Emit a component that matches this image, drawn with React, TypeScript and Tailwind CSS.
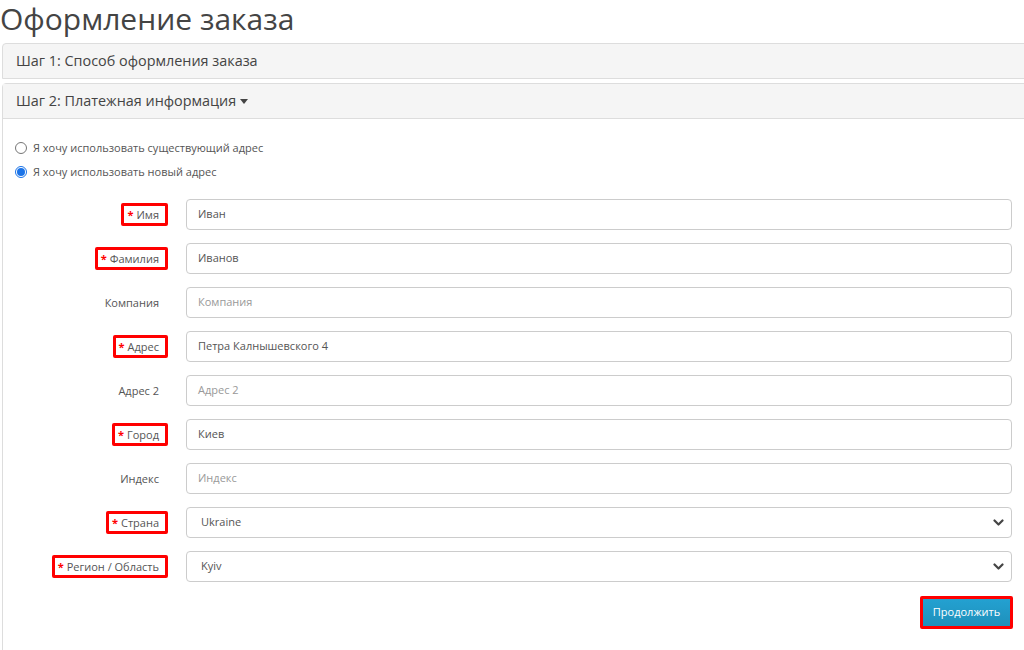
import React from "react";

const font = { fontFamily: "'Open Sans', 'Noto Sans', sans-serif" };

type Row = { label: string; value: string; required: boolean; placeholder?: boolean; select?: boolean };

const rows: Row[] = [
  { label: "Имя", value: "Иван", required: true },
  { label: "Фамилия", value: "Иванов", required: true },
  { label: "Компания", value: "Компания", required: false, placeholder: true },
  { label: "Адрес", value: "Петра Калнышевского 4", required: true },
  { label: "Адрес 2", value: "Адрес 2", required: false, placeholder: true },
  { label: "Город", value: "Киев", required: true },
  { label: "Индекс", value: "Индекс", required: false, placeholder: true },
  { label: "Страна", value: "Ukraine", required: true, select: true },
  { label: "Регион / Область", value: "Kyiv", required: true, select: true },
];

function Chevron() {
  return (
    <svg width="11" height="8" viewBox="0 0 11 8" className="shrink-0">
      <path d="M1.5 1.5 L5.5 5.5 L9.5 1.5" fill="none" stroke="#444" strokeWidth="2.2" strokeLinecap="round" strokeLinejoin="round" />
    </svg>
  );
}

export default function App() {
  return (
    <div className="w-[1024px] h-[650px] overflow-hidden bg-white" style={font}>
      <h1 className="h-[43px] m-0 text-[30px] leading-[38px] font-normal text-[#444] whitespace-nowrap">
        Оформление заказа
      </h1>
      <div className="ml-[2px] w-[1026px]">
        <div className="h-[36px] border border-[#ddd] rounded-t-[4px] bg-[#f5f5f5] flex items-center pl-[13px] text-[14.4px] text-[#444]">
          Шаг 1: Способ оформления заказа
        </div>
        <div className="mt-[4px] border border-[#ddd] rounded-t-[4px] h-[700px]">
          <div className="h-[35px] bg-[#f5f5f5] border-b border-[#ddd] flex items-center pl-[13px] text-[14.4px] text-[#444]">
            Шаг 2: Платежная информация
            <svg width="8" height="5" viewBox="0 0 8 5" className="ml-[4px] mt-[1px]">
              <path d="M0 0 L8 0 L4 5 Z" fill="#444" />
            </svg>
          </div>
          <div className="pt-[19px] pr-[15px]">
            <div className="pl-[12px] flex flex-col gap-[4px] text-[11px] text-[#555]">
              <div className="h-[20px] flex items-center gap-[6px]">
                <span className="w-[12px] h-[12px] rounded-full border border-[#767676] bg-white" />
                <span>Я хочу использовать существующий адрес</span>
              </div>
              <div className="h-[20px] flex items-center gap-[6px]">
                <span className="w-[12px] h-[12px] rounded-full border border-[#1a73e8] bg-white flex items-center justify-center">
                  <span className="w-[8px] h-[8px] rounded-full bg-[#1a73e8]" />
                </span>
                <span>Я хочу использовать новый адрес</span>
              </div>
            </div>
            <div className="mt-[17px] flex flex-col gap-[13px]">
              {rows.map((r) => (
                <div key={r.label} className="h-[31px] flex items-center">
                  <div className="w-[165px] shrink-0 flex justify-end">
                    <span
                      className={
                        "h-[23px] flex items-center border-[3px] rounded-[2px] pl-[3px] pr-[6px] text-[11px] leading-[17px] text-[#555] whitespace-nowrap " +
                        (r.required ? "border-[#ff0000]" : "border-transparent")
                      }
                    >
                      {r.required && <span className="text-[#ff0000] font-bold mr-[3px]">*</span>}
                      {r.label}
                    </span>
                  </div>
                  <div
                    className={
                      "ml-[18px] flex-1 h-[31px] border border-[#ccc] rounded-[4px] bg-white flex items-center justify-between text-[11px] " +
                      (r.select ? "pl-[14px] pr-[7px]" : "pl-[11px]") +
                      (r.placeholder ? " text-[#999]" : " text-[#555]")
                    }
                  >
                    <span>{r.value}</span>
                    {r.select && <Chevron />}
                  </div>
                </div>
              ))}
            </div>
            <div className="mt-[14px] flex justify-end mr-[-1px]">
              <div className="border-[3px] border-[#ff0000] rounded-[2px]">
                <div className="w-[87px] h-[27px] flex items-center justify-center text-[11px] text-white bg-gradient-to-b from-[#23a1d1] to-[#1f90bb]">
                  Продолжить
                </div>
              </div>
            </div>
          </div>
        </div>
      </div>
    </div>
  );
}
